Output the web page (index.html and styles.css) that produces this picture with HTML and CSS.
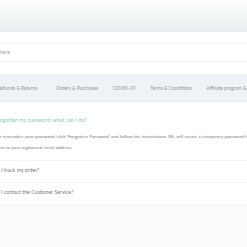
FILE: index.html
```html
<!DOCTYPE html>
<html>
<head>
  <meta charset="utf-8">
  <meta name="viewport" content="width=device-width, initial-scale=1">
  <title>FAQ</title>
  <link rel="stylesheet" href="styles.css">
</head>
<body>
  <div class="header"></div>
  <div class="search">
    <div class="search-box">Search here</div>
  </div>
  <div class="nav">
    <a>Refunds &amp; Returns</a>
    <a>Orders &amp; Purchases</a>
    <a>COVID-19</a>
    <a>Terms &amp; Conditions</a>
    <a>Affiliate program &amp; Partners</a>
  </div>
  <div class="faq">
    <div class="item open">
      <h3>I have forgotten my password, what can I do?</h3>
      <p>If you don't remember your password, click 'Forgotten Password' and follow the instructions. We will create a temporary password for you<br>which is sent to your registered email address.</p>
    </div>
    <div class="item">
      <h3>How can I track my order?</h3>
    </div>
    <div class="item">
      <h3>How can I contact the Customer Service?</h3>
    </div>
  </div>
  <div class="footer"></div>
</body>
</html>
```

FILE: styles.css
```css
*{
  margin: 0;
  padding: 0;
  box-sizing: border-box;
  font-family: 'Lato', sans-serif;
}
body
{
  width: 247px;
  height: 247px;
  overflow: hidden;
  background: #ffffff;
}
.header
{
  height: 32px;
  background: linear-gradient(180deg, #fcfdfd, #e8eff1);
}
.search
{
  padding: 11px 0 12px;
}
.search-box
{
  height: 19px;
  border-top: 1px solid #f1f3f4;
  border-bottom: 1px solid #f1f3f4;
  font-size: 5px;
  letter-spacing: 0.1px;
  line-height: 17px;
  color: #9aa0a2;
  text-indent: -17px;
}
.nav
{
  height: 28px;
  background: #eef3f5;
  border-bottom: 1px solid #e6ecee;
  display: flex;
  align-items: center;
  gap: 15px;
  margin-left: -2px;
  white-space: nowrap;
}
.nav a
{
  font-size: 4.8px;
  color: #8f9598;
}
.nav a:first-child
{
  margin-right: 4px;
}
.faq
{
  margin-left: -23px;
  width: 420px;
  padding-top: 8px;
}
.item
{
  border-bottom: 1px solid #f3f4f4;
  padding: 6px 0 8px;
}
.item h3
{
  font-size: 5px;
  letter-spacing: 0.08px;
  font-weight: 400;
  color: #707476;
  line-height: 7px;
}
.item:not(.open) h3
{
  margin-left: 3px;
}
.item.open
{
  padding: 7px 0 7px;
}
.item.open h3
{
  color: #79c6c0;
  letter-spacing: 0.17px;
  margin: 0 0 7px 3.5px;
}
.item p
{
  font-size: 4.6px;
  letter-spacing: 0.04px;
  color: #777b7d;
  line-height: 11px;
  white-space: nowrap;
  padding-left: 1px;
}
.footer
{
  height: 60px;
  background: #fbfbfb;
}
```
